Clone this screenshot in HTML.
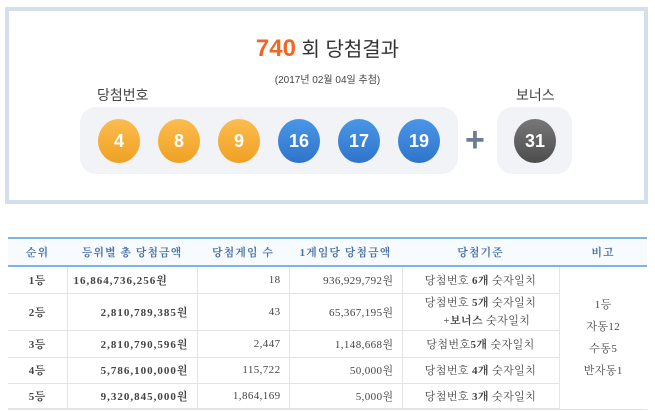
<!DOCTYPE html>
<html><head><meta charset="utf-8"><style>
*{margin:0;padding:0;box-sizing:border-box}
body{width:655px;height:411px;background:#fff;font-family:"Liberation Sans","Noto Sans CJK KR",sans-serif;position:relative;overflow:hidden}
.box{position:absolute;left:5px;top:7px;width:643px;height:197px;border:4px solid #d3dfec;background:#fff}
.a{position:absolute}
.ttl{left:0;width:655px;top:33px;text-align:center;font-size:20px;color:#333}
.ttl b{color:#f26522;font-size:24px;font-weight:bold}
.dt{left:0;width:655px;top:71px;text-align:center;font-size:10px;color:#444}
.lbl{font-size:14px;color:#444}
.pan{background:#f1f3f6;border-radius:16px}
.ball{width:42px;height:44px;border-radius:50%;color:#fff;font-weight:bold;font-size:18px;text-align:center;line-height:44px;top:119px;margin-left:-21px}
.y{background:linear-gradient(#fbbd4e,#f0a024)}
.bl{background:linear-gradient(#4a96e6,#2f74cc)}
.g{background:linear-gradient(#777,#4d4d4d)}
table{position:absolute;left:8px;top:237px;width:639px;border-collapse:collapse;font-family:"Liberation Serif","Noto Serif CJK KR",serif;font-size:11px;color:#444;letter-spacing:0.4px}
th{height:28px;background:#f8fbfd;color:#4873a8;font-size:11px;border-top:2px solid #7fb3e3;border-bottom:2px solid #7fb3e3;font-family:"Liberation Serif","Noto Serif CJK KR",serif;letter-spacing:1px}
td{border-bottom:1px solid #e4e4e4;border-left:1px solid #e4e4e4;height:26px;padding:0 8px}
td:first-child{border-left:none;text-align:center;font-weight:bold}
.m{font-weight:bold;letter-spacing:1px}
.r{text-align:right}.c{text-align:center}
tr:last-child td{border-bottom:2px solid #e4e4e4}
</style></head><body>
<div class="box"></div>
<div class="a ttl"><b>740</b> 회 당첨결과</div>
<div class="a dt">(2017년 02월 04일 추첨)</div>
<div class="a lbl" style="left:97px;top:85px">당첨번호</div>
<div class="a lbl" style="left:516px;top:85px">보너스</div>
<div class="a pan" style="left:80px;top:107px;width:378px;height:67px"></div>
<div class="a pan" style="left:497px;top:107px;width:75px;height:67px"></div>
<div class="a ball y" style="left:119px">4</div>
<div class="a ball y" style="left:179px">8</div>
<div class="a ball y" style="left:239px">9</div>
<div class="a ball bl" style="left:299px">16</div>
<div class="a ball bl" style="left:359px">17</div>
<div class="a ball bl" style="left:419px">19</div>
<div class="a" style="left:465px;top:125px;font-size:34px;line-height:30px;color:#6e7c95;font-weight:bold">+</div>
<div class="a ball g" style="left:535px">31</div>
<table>
<tr><th style="width:59px">순위</th><th style="width:130px">등위별 총 당첨금액</th><th style="width:92px">당첨게임 수</th><th style="width:113px">1게임당 당첨금액</th><th style="width:157px">당첨기준</th><th>비고</th></tr>
<tr style="height:27px"><td>1등</td><td class="m" style="padding-left:6px">16,864,736,256원</td><td class="r">18</td><td class="r">936,929,792원</td><td class="c">당첨번호 <b>6개</b> 숫자일치</td><td class="c" rowspan="5" style="line-height:22px">1등<br>자동12<br>수동5<br>반자동1</td></tr>
<tr style="height:36px"><td>2등</td><td class="r m">2,810,789,385원</td><td class="r">43</td><td class="r">65,367,195원</td><td class="c" style="line-height:18px">당첨번호 <b>5개</b> 숫자일치<br>&nbsp;&nbsp;&nbsp;&nbsp;+<b>보너스</b> 숫자일치</td></tr>
<tr style="height:27px"><td>3등</td><td class="r m">2,810,790,596원</td><td class="r">2,447</td><td class="r">1,148,668원</td><td class="c">당첨번호<b>5개</b> 숫자일치</td></tr>
<tr style="height:26px"><td>4등</td><td class="r m">5,786,100,000원</td><td class="r">115,722</td><td class="r">50,000원</td><td class="c">당첨번호 <b>4개</b> 숫자일치</td></tr>
<tr style="height:26px"><td>5등</td><td class="r m">9,320,845,000원</td><td class="r">1,864,169</td><td class="r">5,000원</td><td class="c">당첨번호 <b>3개</b> 숫자일치</td></tr>
</table>
</body></html>
